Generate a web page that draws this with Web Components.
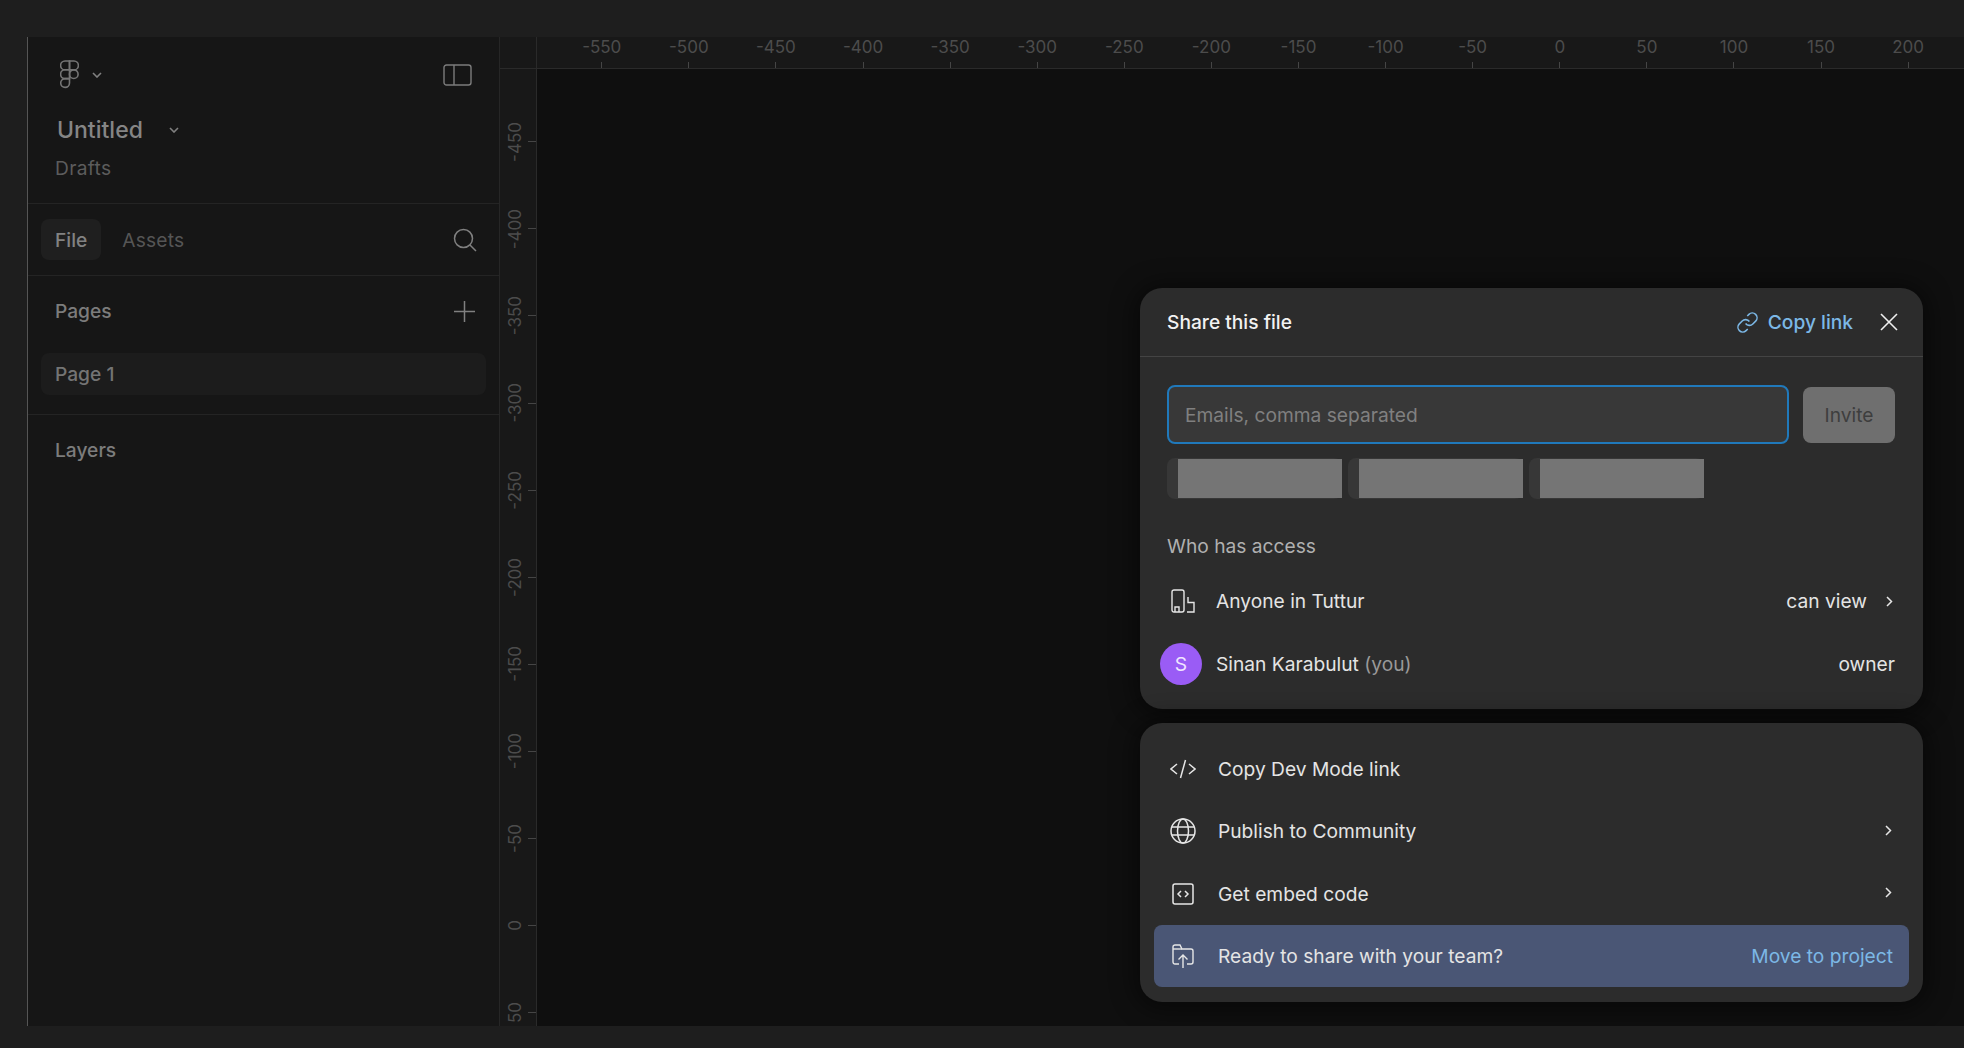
<!DOCTYPE html>
<html lang="en">
<head>
<meta charset="utf-8">
<title>Untitled</title>
<style>
  html, body { margin: 0; height: 100%; background: #1e1e1e; overflow: hidden; }
  body { font-family: Inter, "Noto Sans", sans-serif; font-size: 19.2px; }
</style>
</head>
<body>
<app-shell>
  <side-panel slot="panel"></side-panel>
  <x-ruler slot="top"></x-ruler>
  <y-ruler slot="left"></y-ruler>
  <design-canvas slot="canvas">
    <share-dialog></share-dialog>
    <share-actions></share-actions>
  </design-canvas>
</app-shell>

<script>
// small helper, every svg icon in the page goes through here
const ICONS = {
  figma: `<svg width="19" height="29" viewBox="0 0 19 29" fill="none" stroke="#757575" stroke-width="1.6"><path d="M9.5 1H5a4.2 4.2 0 0 0 0 8.8h4.5z"/><path d="M9.5 1H14a4.2 4.2 0 0 1 0 8.8H9.5z"/><path d="M9.5 9.8H5a4.2 4.2 0 0 0 0 8.8h4.5z"/><circle cx="13.8" cy="14.2" r="4.3"/><path d="M9.5 18.6H5a4.4 4.4 0 1 0 4.5 4.4z"/></svg>`,
  chev: `<svg width="10" height="6" viewBox="0 0 10 6" fill="none" stroke="#808080" stroke-width="1.6"><path d="M1 1l4 4 4-4"/></svg>`,
  panel: `<svg width="29" height="22" viewBox="0 0 29 22" fill="none" stroke="#7c7c7c" stroke-width="1.4"><rect x="1" y="1" width="27" height="20" rx="2.5"/><path d="M11 1v20"/></svg>`,
  search: `<svg width="24" height="24" viewBox="0 0 24 24" fill="none" stroke="#808080" stroke-width="1.5"><circle cx="10.5" cy="10.5" r="9"/><path d="M17 17l6 6"/></svg>`,
  plus: `<svg width="21" height="21" viewBox="0 0 21 21" fill="none" stroke="#808080" stroke-width="1.5"><path d="M10.5 0v21M0 10.5h21"/></svg>`,
  link: `<svg width="23" height="23" viewBox="0 0 24 24" fill="none" stroke="#7cb8e6" stroke-width="1.6"><path d="M10 13a5 5 0 0 0 7.540.540l3-3a5 5 0 0 0-7.070-7.070l-1.720 1.710"/><path d="M14 11a5 5 0 0 0-7.540-.540l-3 3a5 5 0 0 0 7.070 7.070l1.710-1.710"/></svg>`,
  close: `<svg width="18" height="18" viewBox="0 0 18 18" fill="none" stroke="#f0f0f0" stroke-width="1.6"><path d="M1 1l16 16M17 1L1 17"/></svg>`,
  org: `<svg width="24" height="24" viewBox="0 0 24 24" fill="none" stroke="#e6e6e6" stroke-width="1.4"><rect x="1" y="1" width="12" height="22" rx="2"/><path d="M4 23v-5h4v5"/><path d="M17 8v5.500h6V23h-7"/></svg>`,
  code: `<svg width="26" height="20" viewBox="0 0 26 20" fill="none" stroke="#e6e6e6" stroke-width="1.5"><path d="M7 5l-6 5 6 5M19 5l6 5-6 5M15.500 1l-5 18"/></svg>`,
  globe: `<svg width="26" height="26" viewBox="0 0 26 26" fill="none" stroke="#e6e6e6" stroke-width="1.5"><circle cx="13" cy="13" r="12"/><ellipse cx="13" cy="13" rx="5.500" ry="12"/><path d="M2 9h22M2 17h22"/></svg>`,
  embed: `<svg width="22" height="22" viewBox="0 0 22 22" fill="none" stroke="#e6e6e6" stroke-width="1.5"><rect x="1" y="1" width="20" height="20" rx="2"/><path d="M9 8l-3 3 3 3M13 8l3 3-3 3"/></svg>`,
  folder: `<svg width="22" height="24" viewBox="0 0 22 24" fill="none" stroke="#e6e6e6" stroke-width="1.4"><path d="M7 20H3a2 2 0 0 1-2-2V3a2 2 0 0 1 2-2h5l2 4h9a2 2 0 0 1 2 2v11a2 2 0 0 1-2 2h-4"/><path d="M1 5h9"/><path d="M11 24V11M6.500 15.500L11 11l4.500 4.500"/></svg>`,
  arrow: `<svg width="7" height="11" viewBox="0 0 7 11" fill="none" stroke="#e6e6e6" stroke-width="1.5"><path d="M1 1l4.500 4.500L1 10"/></svg>`
};

class AppShell extends HTMLElement {
  constructor() {
    super();
    this.attachShadow({mode: "open"}).innerHTML = `<style>
      :host { display: grid; box-sizing: border-box; height: 1048px; padding: 37px 0 22px 27px;
        grid-template-columns: 473px 36px minmax(0, 1fr); grid-template-rows: 32px minmax(0, 1fr); }
      .panel { grid-row: 1 / 3; min-height: 0; display: grid; }
      .corner { background: #181818; border-bottom: 1px solid #2a2a2a; grid-column: 2; grid-row: 1; }
      .top { grid-column: 3; grid-row: 1; min-width: 0; display: grid; }
      .left { grid-column: 2; grid-row: 2; min-height: 0; display: grid; }
      .canvas { grid-column: 3; grid-row: 2; min-height: 0; display: grid; }
    </style>
    <div class="panel"><slot name="panel"></slot></div>
    <div class="corner"></div>
    <div class="top"><slot name="top"></slot></div>
    <div class="left"><slot name="left"></slot></div>
    <div class="canvas"><slot name="canvas"></slot></div>`;
  }
}

class SidePanel extends HTMLElement {
  constructor() {
    super();
    this.attachShadow({mode: "open"}).innerHTML = `<style>
      :host { display: flex; flex-direction: column; background: #161616; border-left: 1px solid #555;
        border-right: 1px solid #262626; box-sizing: border-box; color: #7c7c7c; font-size: 19.2px; overflow: hidden; }
      svg { display: block; }
      section { border-bottom: 1px solid #242424; box-sizing: border-box; }
      .head { height: 167px; padding: 23px 27px 0 32px; }
      .logo-row { display: flex; align-items: center; height: 29px; }
      .logo-row .chev { margin-left: 13px; }
      .logo-row .toggle { margin-left: auto; }
      .title { display: flex; align-items: center; margin: 26px 0 0 -3px; font-size: 23px; font-weight: 500; line-height: 30px; color: #858585; }
      .title svg { margin-left: 26px; }
      .drafts { margin: 10px 0 0 -5px; color: #5c5c5c; line-height: 26px; letter-spacing: .3px; }
      .tabs { height: 72px; display: flex; align-items: center; padding: 0 22px 0 13px; }
      .tab { height: 41px; padding: 0 14px; display: flex; align-items: center; border-radius: 8px; }
      .tab.on { background: #1f1f1f; font-weight: 500; color: #828282; }
      .tab.off { color: #555; margin-left: 7px; letter-spacing: .2px; }
      .tabs svg { margin-left: auto; }
      .pages { height: 139px; padding: 0 13px; }
      .pages-head { height: 70px; margin-bottom: 7px; display: flex; align-items: center; justify-content: space-between; padding: 0 11px 0 14px; font-weight: 500; }
      .page { height: 42px; background: #1c1c1c; border-radius: 8px; padding-left: 14px; display: flex; align-items: center; font-weight: 500; color: #747474; }
      .layers { height: 70px; padding-left: 27px; display: flex; align-items: center; font-weight: 500; }
    </style>
    <section class="head">
      <div class="logo-row">
        ${ICONS.figma}<span class="chev">${ICONS.chev}</span><span class="toggle">${ICONS.panel}</span>
      </div>
      <div class="title">Untitled ${ICONS.chev}</div>
      <div class="drafts">Drafts</div>
    </section>
    <section class="tabs">
      <div class="tab on">File</div><div class="tab off">Assets</div>${ICONS.search}
    </section>
    <section class="pages">
      <div class="pages-head"><span>Pages</span>${ICONS.plus}</div>
      <div class="page">Page 1</div>
    </section>
    <div class="layers">Layers</div>`;
  }
}

class XRuler extends HTMLElement {
  constructor() {
    super();
    let marks = "";
    for (let v = -550; v <= 200; v += 50) {
      marks += `<div class="mark"><span>${v}</span><i></i></div>`;
    }
    this.attachShadow({mode: "open"}).innerHTML = `<style>
      :host { display: flex; background: #181818; border-bottom: 1px solid #2a2a2a; border-left: 1px solid #2a2a2a;
        box-sizing: border-box; padding-left: 21.2px; overflow: hidden; color: #4c4c4c; font-size: 17px; }
      .mark { flex: 0 0 87.1px; display: flex; flex-direction: column; align-items: center; justify-content: flex-end; }
      span { line-height: 20px; margin-bottom: 5px; }
      i { width: 1px; height: 7px; background: #454545; }
    </style>${marks}`;
  }
}

class YRuler extends HTMLElement {
  constructor() {
    super();
    let marks = "";
    for (let v = -450; v <= 50; v += 50) {
      marks += `<div class="mark"><span>${v}</span><i></i></div>`;
    }
    this.attachShadow({mode: "open"}).innerHTML = `<style>
      :host { display: block; background: #181818; box-sizing: border-box; padding-top: 29.2px; overflow: hidden;
        color: #4c4c4c; font-size: 17px; }
      .mark { height: 87.1px; display: flex; align-items: center; justify-content: flex-end; }
      span { writing-mode: vertical-rl; transform: rotate(180deg); line-height: 20px; margin-right: 3px; }
      i { width: 8px; height: 1px; background: #454545; }
    </style>${marks}`;
  }
}

class DesignCanvas extends HTMLElement {
  constructor() {
    super();
    this.attachShadow({mode: "open"}).innerHTML = `<style>
      :host { display: block; position: relative; background: #0f0f0f; border-left: 1px solid #2a2a2a; overflow: hidden; }
      .stack { position: absolute; right: 41px; bottom: 24px; width: 783px; display: flex; flex-direction: column; gap: 14px; }
    </style>
    <div class="stack"><slot></slot></div>`;
  }
}

class ShareDialog extends HTMLElement {
  constructor() {
    super();
    this.attachShadow({mode: "open"}).innerHTML = `<style>
      :host { display: block; background: #2c2c2c; border-radius: 22px; box-shadow: 0 2px 24px 6px rgba(0,0,0,.45);
        color: #e4e4e4; font-size: 19.2px; }
      svg { display: block; }
      header { height: 68px; display: flex; align-items: center; padding: 0 25px 0 27px; border-bottom: 1px solid #444; font-weight: 500; color: #f2f2f2; }
      .copy { margin-left: auto; display: flex; align-items: center; gap: 9px; color: #7cb8e6; }
      .x { margin-left: 27px; }
      .body { padding: 28px 28px 14px 27px; }
      .invite { display: flex; align-items: center; gap: 14px; }
      .field { flex: 1; height: 59px; box-sizing: border-box; border: 2px solid #2079bb; border-radius: 8px; background: #383838;
        display: flex; align-items: center; padding-left: 16px; color: #808080; }
      .send { width: 92px; height: 56px; background: #6f6f6f; border-radius: 8px; color: #3e3e3e; display: flex; align-items: center; justify-content: center; }
      .chips { display: flex; gap: 6px; margin-top: 14px; }
      .chip { height: 41px; width: 175px; box-sizing: border-box; padding: 1px 0 1px 11px; background: #373737; border-radius: 8px; display: flex; }
      .chip b { flex: 1; background: #757575; }
      .who { margin-top: 33px; line-height: 28px; color: #b0b0b0; }
      .row { height: 62px; display: flex; align-items: center; margin-left: -7px; }
      .who + .row { margin-top: 10px; margin-bottom: 1px; }
      .ico { width: 42px; margin-right: 14px; display: flex; justify-content: center; flex: none; }
      .ico.shift { box-sizing: border-box; padding-left: 3px; }
      .avatar { width: 42px; height: 42px; border-radius: 50%; background: #9a5cf5; color: #f0e6ff; display: flex; align-items: center; justify-content: center; }
      .end { margin-left: auto; }
      .arrow { margin: 0 2px 0 19px; }
      .you { color: #999; }
    </style>
    <header>
      <span>Share this file</span>
      <span class="copy">${ICONS.link}Copy link</span>
      <span class="x">${ICONS.close}</span>
    </header>
    <div class="body">
      <div class="invite">
        <div class="field">Emails, comma separated</div>
        <div class="send">Invite</div>
      </div>
      <div class="chips">
        <div class="chip"><b></b></div><div class="chip"><b></b></div><div class="chip"><b></b></div>
      </div>
      <div class="who">Who has access</div>
      <div class="row">
        <span class="ico shift">${ICONS.org}</span><span>Anyone in Tuttur</span>
        <span class="end">can view</span><span class="arrow">${ICONS.arrow}</span>
      </div>
      <div class="row">
        <span class="ico"><span class="avatar">S</span></span><span>Sinan Karabulut <span class="you">(you)</span></span>
        <span class="end">owner</span>
      </div>
    </div>`;
  }
}

class ShareActions extends HTMLElement {
  constructor() {
    super();
    this.attachShadow({mode: "open"}).innerHTML = `<style>
      :host { display: block; background: #2c2c2c; border-radius: 22px; box-shadow: 0 2px 24px 6px rgba(0,0,0,.45);
        padding: 14px 14px 15px; color: #e4e4e4; font-size: 19.2px; }
      svg { display: block; }
      .row { height: 62.6px; display: flex; align-items: center; padding: 0 16px; }
      .ico { width: 26px; margin-right: 22px; display: flex; justify-content: center; flex: none; }
      .end { margin-left: auto; }
      .arrow { margin: -2px 1px 0 auto; }
      .promo { background: #4a5675; border-radius: 8px; height: 62px; }
      .promo .end { color: #7cb8e6; }
    </style>
    <div class="row"><span class="ico">${ICONS.code}</span>Copy Dev Mode link</div>
    <div class="row"><span class="ico">${ICONS.globe}</span>Publish to Community<span class="arrow">${ICONS.arrow}</span></div>
    <div class="row"><span class="ico">${ICONS.embed}</span>Get embed code<span class="arrow">${ICONS.arrow}</span></div>
    <div class="row promo"><span class="ico">${ICONS.folder}</span>Ready to share with your team?<span class="end">Move to project</span></div>`;
  }
}

customElements.define("app-shell", AppShell);
customElements.define("side-panel", SidePanel);
customElements.define("x-ruler", XRuler);
customElements.define("y-ruler", YRuler);
customElements.define("design-canvas", DesignCanvas);
customElements.define("share-dialog", ShareDialog);
customElements.define("share-actions", ShareActions);
</script>
</body>
</html>
